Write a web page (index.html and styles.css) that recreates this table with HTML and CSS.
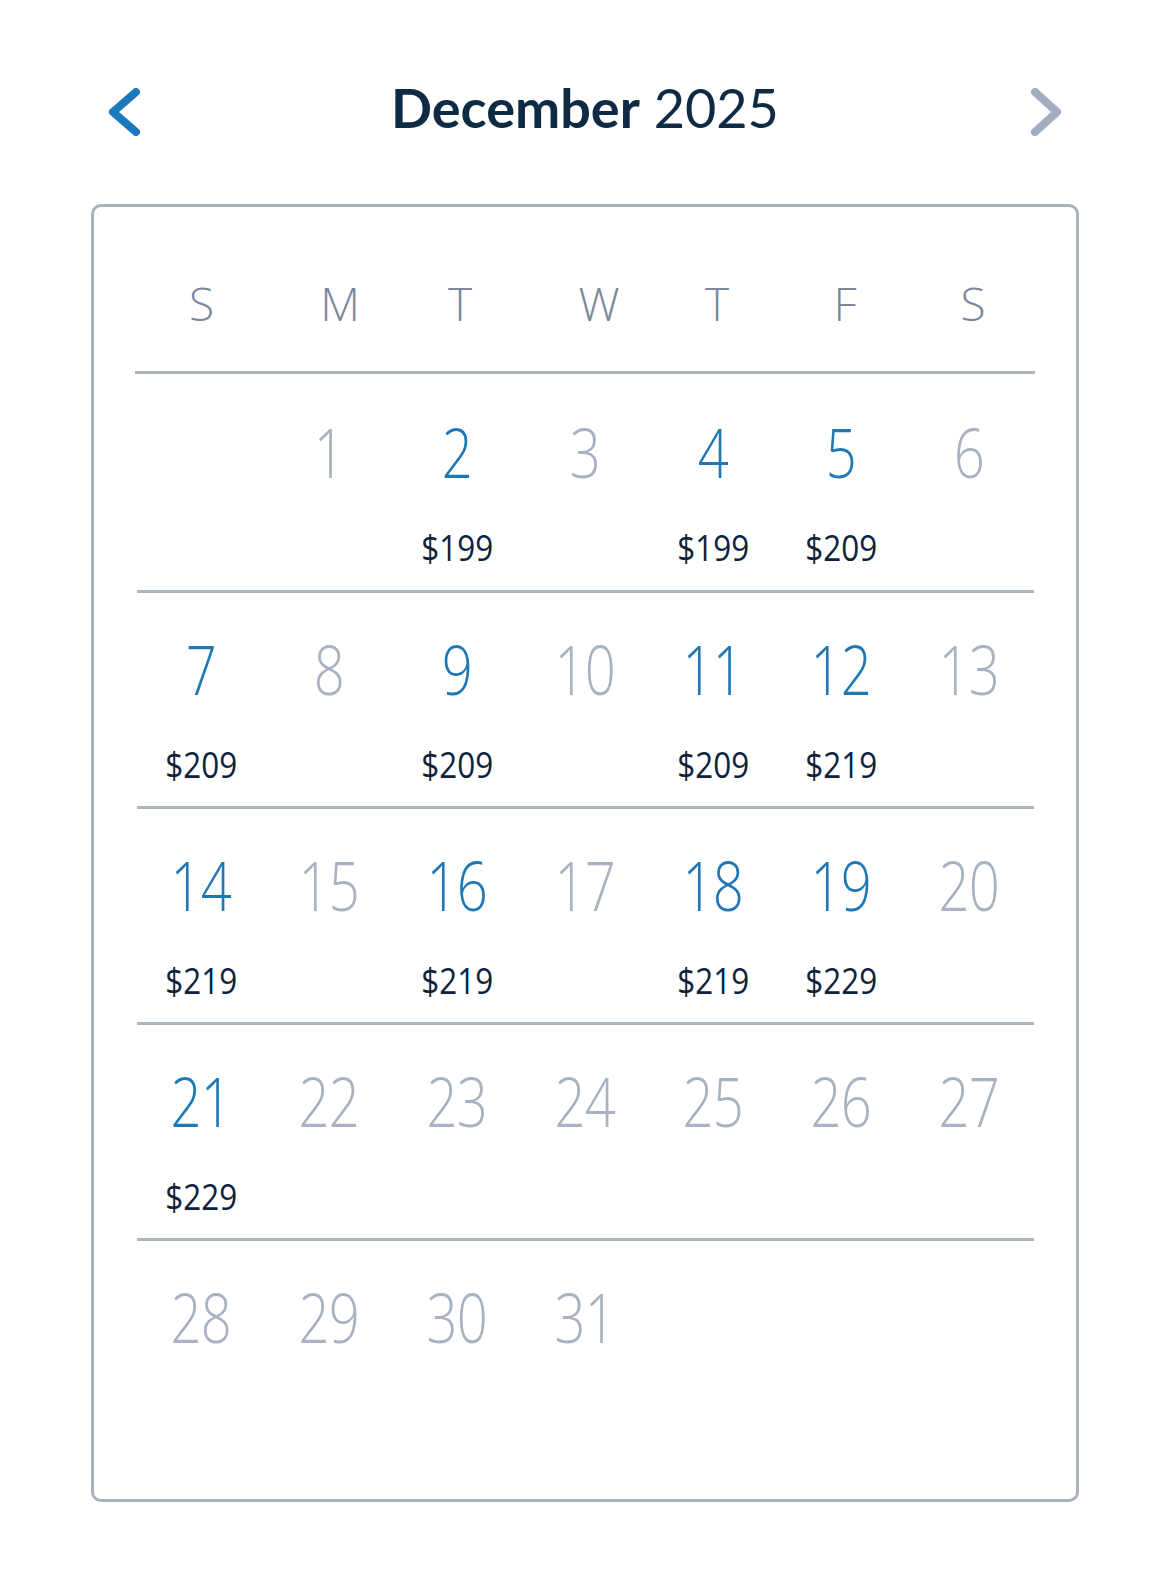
FILE: index.html
```html
<!DOCTYPE html>
<html>
<head>
<meta charset="utf-8">
<link rel="stylesheet" href="styles.css">
</head>
<body>
<div class="page">
  <div class="header">
    <svg class="chev" viewBox="0 0 48 100" width="48" height="100"><polyline points="35,32 12,52 35,72" fill="none" stroke="#1a78bd" stroke-width="8" stroke-linecap="round" stroke-linejoin="round"/></svg>
    <div class="title"><b>December</b> 2025</div>
    <svg class="chev" viewBox="0 0 48 100" width="48" height="100"><polyline points="14,32 36,52 14,72" fill="none" stroke="#a1adc0" stroke-width="8" stroke-linecap="round" stroke-linejoin="round"/></svg>
  </div>
  <div class="card">
    <div class="weekdays">
      <span>S</span><span>M</span><span>T</span><span>W</span><span>T</span><span>F</span><span>S</span>
    </div>
    <div class="week first">
      <div class="day"></div>
      <div class="day"><span class="num">1</span></div>
      <div class="day on"><span class="num">2</span><span class="price">$199</span></div>
      <div class="day"><span class="num">3</span></div>
      <div class="day on"><span class="num">4</span><span class="price">$199</span></div>
      <div class="day on"><span class="num">5</span><span class="price">$209</span></div>
      <div class="day"><span class="num">6</span></div>
    </div>
    <div class="week">
      <div class="day on"><span class="num">7</span><span class="price">$209</span></div>
      <div class="day"><span class="num">8</span></div>
      <div class="day on"><span class="num">9</span><span class="price">$209</span></div>
      <div class="day"><span class="num">10</span></div>
      <div class="day on"><span class="num">11</span><span class="price">$209</span></div>
      <div class="day on"><span class="num">12</span><span class="price">$219</span></div>
      <div class="day"><span class="num">13</span></div>
    </div>
    <div class="week">
      <div class="day on"><span class="num">14</span><span class="price">$219</span></div>
      <div class="day"><span class="num">15</span></div>
      <div class="day on"><span class="num">16</span><span class="price">$219</span></div>
      <div class="day"><span class="num">17</span></div>
      <div class="day on"><span class="num">18</span><span class="price">$219</span></div>
      <div class="day on"><span class="num">19</span><span class="price">$229</span></div>
      <div class="day"><span class="num">20</span></div>
    </div>
    <div class="week">
      <div class="day on"><span class="num">21</span><span class="price">$229</span></div>
      <div class="day"><span class="num">22</span></div>
      <div class="day"><span class="num">23</span></div>
      <div class="day"><span class="num">24</span></div>
      <div class="day"><span class="num">25</span></div>
      <div class="day"><span class="num">26</span></div>
      <div class="day"><span class="num">27</span></div>
    </div>
    <div class="week last">
      <div class="day"><span class="num">28</span></div>
      <div class="day"><span class="num">29</span></div>
      <div class="day"><span class="num">30</span></div>
      <div class="day"><span class="num">31</span></div>
      <div class="day"></div>
      <div class="day"></div>
      <div class="day"></div>
    </div>
  </div>
</div>
</body>
</html>
```
FILE: styles.css
```css
* { box-sizing: border-box; }
html, body { margin: 0; padding: 0; background: #ffffff; }
body { font-family: "Open Sans", "Lato", sans-serif; }

.page {
  padding-top: 60px;
  width: 988px;
  margin-left: 91px;
}

.header {
  display: flex;
  justify-content: space-between;
  align-items: center;
  height: 100px;
  padding: 0 10px;
}
.chev { display: block; }
.title {
  font-family: "Lato", sans-serif;
  font-size: 54px;
  color: #0f2a44;
  font-weight: 400;
  line-height: 1;
  margin-top: -4px;
}
.title b { font-weight: 700; }

.card {
  margin-top: 44px;
  height: 1298px;
  border: 3px solid #a9b1bf;
  border-radius: 10px;
  padding-left: 44px;
}

.weekdays {
  width: 900px;
  margin-left: -3px;
  display: grid;
  grid-template-columns: 133px 144px 96px 182px 54px 202px 54px;
  padding-top: 70px;
  padding-bottom: 42px;
  border-bottom: 3px solid #abb3bc;
}
.weekdays span {
  text-align: center;
  font-size: 46px;
  line-height: 52px;
  font-weight: 300;
  color: #7b879b;
}

.week {
  width: 897px;
  margin-left: -1px;
  display: grid;
  grid-template-columns: repeat(7, 128px);
  padding-top: 41px;
  padding-bottom: 22px;
  border-bottom: 3px solid #abb3bc;
  height: 216px;
}
.week.first { padding-top: 43px; height: 219px; }
.week.last { border-bottom: none; }

.day {
  display: flex;
  flex-direction: column;
  align-items: center;
}
.num {
  font-size: 68px;
  line-height: 70px;
  font-weight: 300;
  color: #a8b2c2;
  transform: scaleX(0.8);
  letter-spacing: -1px;
}
.day.on .num { color: #1f78b4; }
.price {
  margin-top: 40px;
  font-size: 37px;
  line-height: 40px;
  font-weight: 400;
  color: #0c2340;
  transform: scaleX(0.85);
}
```
